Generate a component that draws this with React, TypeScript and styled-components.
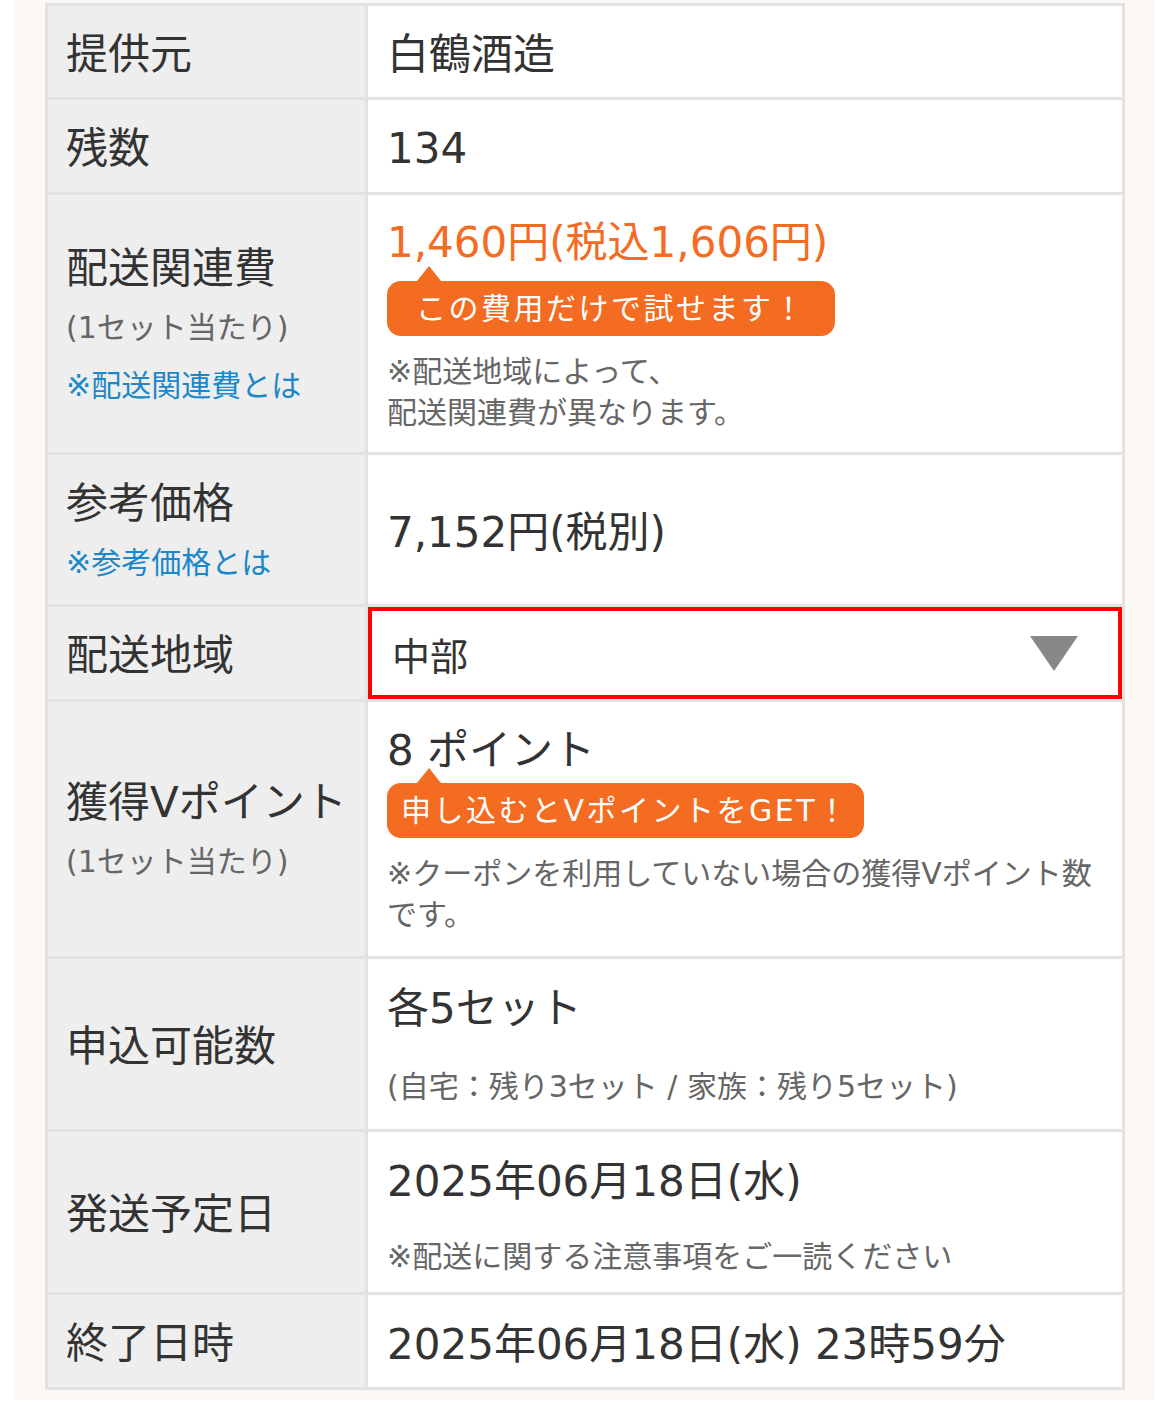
import React from 'react';
import styled, { createGlobalStyle } from 'styled-components';

const GlobalStyle = createGlobalStyle`
  html, body {
    margin: 0;
    padding: 0;
    background: #fff;
  }
  body {
    font-family: "DejaVu Sans", "Noto Sans CJK JP", sans-serif;
    color: #333;
  }
`;

const Page = styled.div`
  margin: 0 15px;
  padding: 3px 30px 10px;
  background: #fcf8f3;
`;

const SpecTable = styled.div`
  display: grid;
  grid-template-columns: 317px 1fr;
  gap: 3px;
  padding: 3px;
  background: #e2e2e2;
`;

const Label = styled.div`
  display: flex;
  flex-direction: column;
  justify-content: center;
  padding: 6px 18px 0;
  background: #eee;
  white-space: nowrap;
`;

const LabelMain = styled.div`
  font-size: 42px;
  line-height: 60px;
  color: #333;
`;

const LabelSub = styled.div<{ $link?: boolean }>`
  font-size: 30px;
  line-height: 58px;
  color: ${({ $link }) => ($link ? '#1a88c9' : '#666')};
`;

const Value = styled.div<{ $h: number; $pad?: string }>`
  display: flex;
  flex-direction: column;
  justify-content: center;
  align-items: flex-start;
  box-sizing: border-box;
  min-height: ${({ $h }) => $h}px;
  padding: ${({ $pad }) => $pad || '6px 19px 0'};
  background: #fff;
`;

const MainText = styled.div<{ $accent?: boolean }>`
  font-size: 42px;
  line-height: 60px;
  white-space: nowrap;
  color: ${({ $accent }) => ($accent ? '#f36c21' : '#333')};
`;

const Badge = styled.div<{ $mt: number; $px: number; $spacing?: number }>`
  position: relative;
  margin-top: ${({ $mt }) => $mt}px;
  height: 55px;
  padding: 0 ${({ $px }) => $px}px;
  border-radius: 14px;
  background: #f36c21;
  color: #fff;
  font-size: 30px;
  line-height: 55px;
  letter-spacing: ${({ $spacing }) => $spacing || 0}px;
  white-space: nowrap;

  &::before {
    content: '';
    position: absolute;
    left: 30px;
    top: -15px;
    border-left: 12px solid transparent;
    border-right: 12px solid transparent;
    border-bottom: 15px solid #f36c21;
  }
`;

const Note = styled.div<{ $mt: number; $lh?: number }>`
  margin-top: ${({ $mt }) => $mt}px;
  font-size: 30px;
  line-height: ${({ $lh }) => $lh || 41}px;
  color: #666;
  white-space: nowrap;
`;

const RegionSelect = styled.div`
  flex: 1;
  align-self: stretch;
  display: flex;
  align-items: center;
  justify-content: space-between;
  padding: 0 40px 0 20px;
  border: 4px solid #f00;
  font-size: 38px;
  color: #333;
  cursor: pointer;
`;

const Arrow = () => (
  <svg width="48" height="35" viewBox="0 0 48 35">
    <polygon points="0,0 48,0 24,35" fill="#888" />
  </svg>
);

const App: React.FC = () => {
  return (
    <>
      <GlobalStyle />
      <Page>
        <SpecTable>
          <Label>
            <LabelMain>提供元</LabelMain>
          </Label>
          <Value $h={91}>
            <MainText>白鶴酒造</MainText>
          </Value>

          <Label>
            <LabelMain>残数</LabelMain>
          </Label>
          <Value $h={92}>
            <MainText>134</MainText>
          </Value>

          <Label>
            <LabelMain>配送関連費</LabelMain>
            <LabelSub>(1セット当たり)</LabelSub>
            <LabelSub $link>※配送関連費とは</LabelSub>
          </Label>
          <Value $h={257} $pad="17px 19px 18px">
            <MainText $accent>1,460円(税込1,606円)</MainText>
            <Badge $mt={8} $px={29} $spacing={2.5}>この費用だけで試せます！</Badge>
            <Note $mt={15}>
              ※配送地域によって、
              <br />
              配送関連費が異なります。
            </Note>
          </Value>

          <Label>
            <LabelMain>参考価格</LabelMain>
            <LabelSub $link>※参考価格とは</LabelSub>
          </Label>
          <Value $h={149}>
            <MainText>7,152円(税別)</MainText>
          </Value>

          <Label>
            <LabelMain>配送地域</LabelMain>
          </Label>
          <Value $h={92} $pad="0">
            <RegionSelect>
              <span>中部</span>
              <Arrow />
            </RegionSelect>
          </Value>

          <Label>
            <LabelMain>獲得Vポイント</LabelMain>
            <LabelSub>(1セット当たり)</LabelSub>
          </Label>
          <Value $h={254} $pad="19px 19px 21px">
            <MainText>8 ポイント</MainText>
            <Badge $mt={2} $px={14} $spacing={2.5}>申し込むとVポイントをGET！</Badge>
            <Note $mt={15}>
              ※クーポンを利用していない場合の獲得Vポイント数
              <br />
              です。
            </Note>
          </Value>

          <Label>
            <LabelMain>申込可能数</LabelMain>
          </Label>
          <Value $h={170} $pad="20px 19px 22px">
            <MainText>各5セット</MainText>
            <Note $mt={28} $lh={40}>(自宅：残り3セット / 家族：残り5セット)</Note>
          </Value>

          <Label>
            <LabelMain>発送予定日</LabelMain>
          </Label>
          <Value $h={160} $pad="20px 19px 15px">
            <MainText>2025年06月18日(水)</MainText>
            <Note $mt={25} $lh={40}>※配送に関する注意事項をご一読ください</Note>
          </Value>

          <Label>
            <LabelMain>終了日時</LabelMain>
          </Label>
          <Value $h={92} $pad="8px 19px 0">
            <MainText>2025年06月18日(水) 23時59分</MainText>
          </Value>
        </SpecTable>
      </Page>
    </>
  );
};

export default App;
